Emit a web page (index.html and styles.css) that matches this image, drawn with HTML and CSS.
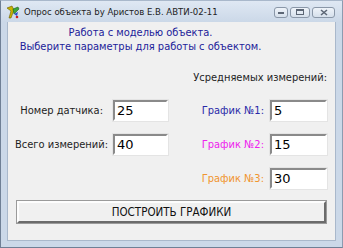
FILE: index.html
```html
<!DOCTYPE html>
<html lang="ru">
<head>
  <meta charset="UTF-8" />
  <title>Опрос объекта</title>
  <link rel="stylesheet" href="styles.css">
</head>
<body>
  <div class="window">
    <div class="titlebar">
      <svg class="app-icon" width="14" height="14" viewBox="0 0 14 14">
        <path d="M1 3 L6 1 L8 5 L5 13 L3 13 L5 6 Z" fill="#c8b400" stroke="#6a5a00" stroke-width="0.6"/>
        <path d="M7 4 L12 2 L13 4 L8 9 Z" fill="#3aa83a" stroke="#1e5e1e" stroke-width="0.6"/>
        <path d="M8 9 L12 7 L11 11 Z" fill="#2a4fd0"/>
        <circle cx="11" cy="12" r="1.3" fill="#d02020"/>
      </svg>
      <span class="title">Опрос объекта by Аристов Е.В. АВТИ-02-11</span>
      <div class="controls">
        <span class="ctl ctl-min"><i></i></span>
        <span class="ctl ctl-max"><i></i></span>
        <span class="ctl ctl-close">
          <svg width="8" height="7" viewBox="0 0 8 7"><path d="M1 1 L7 6 M7 1 L1 6" stroke="#5c6675" stroke-width="1.6"/></svg>
        </span>
      </div>
    </div>

    <div class="client">
      <div class="intro">
        Работа с моделью объекта.<br>
        Выберите параметры для работы с объектом.
      </div>

      <div class="params">
        <div class="heading">Усредняемых измерений:</div>

        <label class="lbl lbl-sensor">Номер датчика:</label>
        <input class="field" type="text" value="25">
        <label class="lbl lbl-right graph1">График №1:</label>
        <input class="field" type="text" value="5">

        <label class="lbl">Всего измерений:</label>
        <input class="field" type="text" value="40">
        <label class="lbl lbl-right graph2">График №2:</label>
        <input class="field" type="text" value="15">

        <label class="lbl lbl-right graph3 col3">График №3:</label>
        <input class="field" type="text" value="30">
      </div>

      <button class="build-btn" type="button">ПОСТРОИТЬ ГРАФИКИ</button>
    </div>
  </div>
</body>
</html>
```

FILE: styles.css
```css
body {
  margin: 0;
  padding: 0;
  font-family: 'DejaVu Sans Condensed', 'DejaVu Sans', sans-serif;
}
.window {
  width: 343px;
  height: 248px;
  box-sizing: border-box;
  background: #cbd8e8;
  border: 1px solid #6f7f95;
  border-top-color: #a9b8cb;
  border-right-color: #8c9bb0;
  display: flex;
  flex-direction: column;
}
.titlebar {
  height: 21px;
  display: flex;
  align-items: center;
  padding: 0 4px 0 5px;
  background: linear-gradient(#dfe8f3, #cbd8e8);
}
.app-icon {
  margin-right: 4px;
  margin-top: 1px;
}
.title {
  font-size: 9.5px;
  color: #222;
}
.controls {
  margin-left: auto;
  display: flex;
  gap: 2px;
  margin-top: 1px;
  margin-right: 3px;
}
.ctl {
  height: 9px;
  border: 1px solid #8a97a8;
  border-radius: 3px;
  background: linear-gradient(#eef3f9, #d6e0ec);
  display: flex;
  align-items: center;
  justify-content: center;
}
.ctl-min { width: 12px; }
.ctl-max { width: 18px; }
.ctl-close { width: 21px; }
.ctl-min i {
  display: block;
  width: 6px;
  height: 2px;
  background: #5c6675;
  margin-top: 2px;
}
.ctl-max i {
  display: block;
  width: 6px;
  height: 3px;
  border: 1px solid #5c6675;
  border-top-width: 2px;
}
.client {
  flex: 1;
  margin: 0 6px 6px 6px;
  background: #f0f0f0;
  border: 1px solid #a9b8cb;
  border-top: none;
  font-size: 11px;
  color: #1e1e1e;
}
.intro {
  width: 265px;
  padding-top: 4px;
  text-align: center;
  line-height: 14px;
  color: #1c1c9a;
}
.params {
  display: grid;
  grid-template-columns: 105px 55px 102px 57px;
  grid-template-rows: 21px 21px 21px 21px;
  row-gap: 13px;
  margin-top: 12px;
}
.heading {
  grid-column: 3 / 5;
  justify-self: end;
  align-self: end;
  line-height: 16px;
  margin-bottom: 1px;
}
.lbl {
  text-align: right;
  padding-right: 5px;
  align-self: center;
  white-space: nowrap;
}
.lbl-sensor {
  padding-right: 10px;
}
.lbl-right {
  padding-right: 6px;
}
.col3 {
  grid-column: 3;
}
.graph1 { color: #2a2aa8; }
.graph2 { color: #ee22ee; }
.graph3 { color: #f0952e; }
.field {
  box-sizing: border-box;
  width: 100%;
  height: 21px;
  margin: 0;
  padding: 0 0 0 2px;
  border: 2px solid;
  border-color: #8a8a8a #ffffff #ffffff #8a8a8a;
  outline: 1px solid #e4e4e4;
  background: #fff;
  font-family: 'DejaVu Sans', sans-serif;
  font-size: 13px;
  color: #000;
}
.build-btn {
  display: block;
  width: 309px;
  height: 22px;
  margin: 12px 0 0 9px;
  padding: 0;
  background: #f0f0f0;
  border: 2px solid;
  border-color: #fdfdfd #6b6b6b #6b6b6b #fdfdfd;
  outline: 1px solid #9a9a9a;
  font-family: 'DejaVu Sans Condensed', 'DejaVu Sans', sans-serif;
  font-size: 11.5px;
  color: #111;
}
```
